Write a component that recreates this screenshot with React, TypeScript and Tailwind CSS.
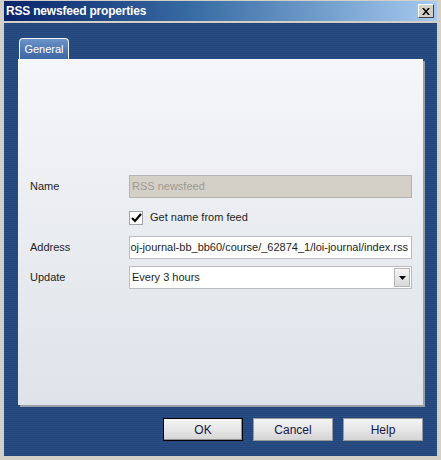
export default function App() {
  return (
    <div className="w-[441px] h-[460px] bg-[#d4d0c8] pt-[1px] px-[4px] pb-[4px] flex flex-col font-['Liberation_Sans',Arial,sans-serif] select-none">
      {/* title bar */}
      <div className="h-[20px] flex items-center justify-between pl-[2px] pr-[3px] bg-[linear-gradient(90deg,#0a246a_0%,#3a6ea5_45%,#a6caf0_100%)]">
        <span className="text-white font-bold text-[12px] leading-none tracking-[-0.2px]">RSS newsfeed properties</span>
        <button className="w-[16px] h-[14px] bg-[#d4d0c8] border border-t-white border-l-white border-r-[#404040] border-b-[#404040] flex items-center justify-center">
          <svg width="8" height="7" viewBox="0 0 8 7">
            <path d="M0 0h2l2 2.5L6 0h2L5 3.5 8 7H6L4 4.5 2 7H0l3-3.5z" fill="#000" />
          </svg>
        </button>
      </div>
      {/* body */}
      <div className="mt-[2px] flex-1 flex flex-col px-[14px] pt-[15px] pb-[15px] bg-[#26497f] bg-[repeating-linear-gradient(0deg,#23457a_0px,#23457a_1px,#294d85_1px,#294d85_2px)]">
        <div className="flex pl-[1px]">
          <div className="w-[50px] h-[21px] rounded-t-[4px] border border-b-0 border-[#f2f4f7] bg-[linear-gradient(180deg,#6f95c8_0%,#4a75b1_60%,#3e68a5_100%)] flex items-center justify-center">
            <span className="text-white text-[11px] leading-none">General</span>
          </div>
        </div>
        <div className="w-[405px] h-[346px] bg-[linear-gradient(180deg,#f5f6f8_0%,#e9ecf0_50%,#dfe3ea_100%)] shadow-[2px_2px_0_#9aa0aa] pt-[116px] pl-[12px] pr-[11px]">
          <div className="grid grid-cols-[99px_1fr] items-center text-[11px] text-[#1e1e1e]">
            <span>Name</span>
            <div className="h-[23px] bg-[#d4d0c8] border border-[#b6b4ae] flex items-center pl-[2px] text-[#9d9a93]">RSS newsfeed</div>

            <span />
            <div className="h-[13px] mt-[13px] flex items-center gap-[7px]">
              <div className="w-[14px] h-[14px] bg-white border border-[#9fa4aa] flex items-center justify-center">
                <svg width="11" height="10" viewBox="0 0 11 10">
                  <path d="M1 5l3 3 6-7" stroke="#000" strokeWidth="2.2" fill="none" />
                </svg>
              </div>
              <span>Get name from feed</span>
            </div>

            <span className="mt-[12px]">Address</span>
            <div className="h-[23px] mt-[12px] bg-white border border-[#b9bcc2] flex items-center overflow-hidden whitespace-nowrap justify-end pr-[3px]">
              oj-journal-bb_bb60/course/_62874_1/loi-journal/index.rss
            </div>

            <span className="mt-[7px]">Update</span>
            <div className="h-[23px] mt-[7px] bg-white border border-[#b9bcc2] flex items-center justify-between pl-[2px] pr-[1px]">
              <span>Every 3 hours</span>
              <div className="w-[16px] h-[19px] bg-[linear-gradient(180deg,#f4f4f4,#d9d9d9)] border border-[#b4b4b4] flex items-center justify-center">
                <svg width="7" height="4" viewBox="0 0 7 4">
                  <path d="M0 0h7L3.5 4z" fill="#000" />
                </svg>
              </div>
            </div>
          </div>
        </div>
        <div className="mt-[13px] flex justify-end gap-[10px] text-[12px] text-[#15154a]">
          <button className="w-[80px] h-[23px] border border-black bg-[linear-gradient(180deg,#f4f4f4_0%,#e6e6e6_50%,#d4d4d4_100%)] shadow-[inset_-1px_-1px_0_#909090]">OK</button>
          <button className="w-[80px] h-[23px] border border-[#9a9a9a] bg-[linear-gradient(180deg,#f4f4f4_0%,#e6e6e6_50%,#d4d4d4_100%)]">Cancel</button>
          <button className="w-[80px] h-[23px] border border-[#9a9a9a] bg-[linear-gradient(180deg,#f4f4f4_0%,#e6e6e6_50%,#d4d4d4_100%)]">Help</button>
        </div>
      </div>
    </div>
  );
}
